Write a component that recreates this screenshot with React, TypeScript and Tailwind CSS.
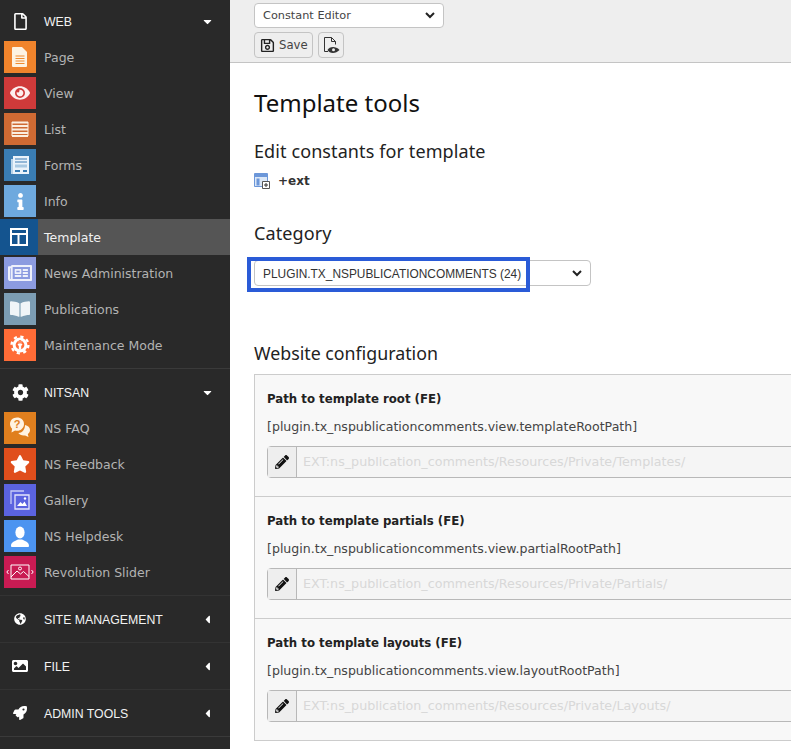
import React from "react";
import {
  FaBookOpen,
  FaCaretDown,
  FaCaretLeft,
  FaCog,
  FaEye,
  FaGlobeAmericas,
  FaImage,
  FaInfo,
  FaPencilAlt,
  FaRegFile,
  FaRegNewspaper,
  FaRegSave,
  FaRocket,
  FaStar,
} from "react-icons/fa";

const PageIcon = () => (
  <svg width="16" height="20" viewBox="0 0 16 20">
    <path d="M1 0h9l5 5v14a1 1 0 0 1-1 1H1a1 1 0 0 1-1-1V1a1 1 0 0 1 1-1z" fill="#fdf3e3" />
    <path d="M3.500 9h9M3.500 11.500h9M3.500 14h9M3.500 16.500h9" stroke="#f08c30" strokeWidth="1.2" />
  </svg>
);

const ListIcon = () => (
  <svg width="18" height="16" viewBox="0 0 18 16">
    <path d="M1 1.500h16M1 5h16M1 8.500h16M1 12h16M1 15h16" stroke="#fbeee0" strokeWidth="1.8" />
    <path d="M1 1v14M17 1v14" stroke="#fbeee0" strokeWidth="1" />
  </svg>
);

const FormsIcon = () => (
  <svg width="18" height="18" viewBox="0 0 18 18">
    <path d="M2 0h16v18H2z" fill="#eaf3fa" />
    <path d="M0 3h2v15H0z" fill="#b9d4e9" />
    <path d="M4 3h12M4 6h12" stroke="#3a7db3" strokeWidth="1.2" />
    <path d="M4 8.500h12v3H4z" fill="#a8c9e2" />
    <path d="M4 14h5v2H4zM12 14h4v2h-4z" fill="#3a7db3" />
  </svg>
);

const TemplateIcon = () => (
  <svg width="18" height="18" viewBox="0 0 18 18" fill="none">
    <path d="M1 1h16v16H1z" stroke="#fff" strokeWidth="2" />
    <path d="M1 6h16M8.500 6v11" stroke="#fff" strokeWidth="2" />
  </svg>
);

const MaintenanceIcon = () => (
  <svg width="20" height="20" viewBox="0 0 20 20">
    <circle cx="10" cy="10" r="8.400" fill="none" stroke="#fff" strokeWidth="2.400" strokeDasharray="3.200 3.400" />
    <circle cx="10" cy="10" r="7.400" fill="#fff" />
    <circle cx="10" cy="10" r="4.400" fill="#ff6c37" />
    <path d="M8.800 5h2.400v3.500l1.300 1-1.300 1.500v3.800H8.800V11L7.500 9.500l1.300-1z" fill="#fff" />
    <path d="M9.200 5h1.600v3.500H9.200z" fill="#ff6c37" />
  </svg>
);

const FaqIcon = () => (
  <svg width="22" height="22" viewBox="0 0 22 22">
    <path d="M16 8c3 .6 5 2.600 5 5 0 1.600-.8 3-2.200 4L19.500 20l-3.400-1.600c-.5.100-1 .1-1.500.1-2.300 0-4.300-1-5.300-2.500 3.800 0 6.700-3.300 6.700-8z" fill="#fff3e2" />
    <path d="M8 .5C4 .5 1 3.300 1 7c0 1.900.8 3.500 2.100 4.700L2.500 15.500l3.600-2c.6.200 1.200.3 1.900.3 4 0 7-2.900 7-6.800S12 .5 8 .5z" fill="#fff3e2" />
    <text x="8" y="11" textAnchor="middle" fontSize="11" fontWeight="700" fontFamily="'Liberation Sans', sans-serif" fill="#e07f1e">?</text>
  </svg>
);

const GalleryIcon = () => (
  <svg width="20" height="20" viewBox="0 0 20 20" fill="none">
    <path d="M14 1H1v13" stroke="#c8cbf6" strokeWidth="1.300" />
    <path d="M5 5h14v14H5z" stroke="#e4e5fb" strokeWidth="1.300" />
    <path d="M7 16l3.500-4 2 2 2-2.500 2.500 4.500z" fill="#fff" />
    <circle cx="15" cy="8.500" r="1.200" fill="#fff" />
  </svg>
);

const HelpdeskIcon = () => (
  <svg width="20" height="21" viewBox="0 0 20 21">
    <ellipse cx="10" cy="6.500" rx="4.600" ry="6" fill="#fff" />
    <path d="M1 20c0-3.500 2.500-4.300 7-6.500h4c4.500 2.200 7 3 7 6.500 0 .5-.5 1-1 1H2c-.5 0-1-.5-1-1z" fill="#fff" />
  </svg>
);

const SliderIcon = () => (
  <svg width="28" height="18" viewBox="0 0 28 18" fill="none">
    <path d="M5 2h18v14H5z" stroke="#fff" strokeWidth="1" />
    <path d="M5 14l6-6 3.500 3 3-2.500 5.500 5" stroke="#fff" strokeWidth="1" />
    <circle cx="14" cy="5.500" r="1.500" stroke="#fff" strokeWidth="1" />
    <path d="M2.500 7L.8 9l1.700 2M25.500 7l1.700 2-1.700 2" stroke="#fff" strokeWidth="1" />
  </svg>
);

const SavePreviewIcon = () => (
  <svg width="17" height="19" viewBox="0 0 17 19" fill="none">
    <path d="M5 15.500H1.500v-14h7l4 4v3M8.500 1.500v4h4" stroke="#333" strokeWidth="1" />
    <path d="M4.500 14c2-3.500 8-4.200 12 0-4 4.300-10 3.800-12 0z" fill="#333" />
    <circle cx="10.500" cy="13.800" r="1.500" fill="#eee" />
  </svg>
);

const ExtIcon = () => (
  <svg width="16" height="16" viewBox="0 0 16 16">
    <path d="M.5.500h13v13H.5z" fill="#dce8f7" stroke="#6c97d9" />
    <path d="M1 1h12v3H1z" fill="#6c97d9" />
    <path d="M2.500 5.500h3v7h-3z" fill="#6c97d9" />
    <path d="M8.500 8.500h7v7h-7z" fill="#fff" stroke="#555" />
    <path d="M12 10v4M10 12h4" stroke="#333" />
  </svg>
);

const modules1 = [
  { name: "Page", bg: "bg-[#f0842c]", icon: <PageIcon /> },
  { name: "View", bg: "bg-[#cf3a3a]", icon: <FaEye size={20} color="#fdeeee" /> },
  { name: "List", bg: "bg-[#cf6a33]", icon: <ListIcon /> },
  { name: "Forms", bg: "bg-[#3a7db3]", icon: <FormsIcon /> },
  { name: "Info", bg: "bg-[#6ea9de]", icon: <FaInfo size={17} color="#fff" /> },
];

const modules2 = [
  { name: "News Administration", bg: "bg-[#8c9be0]", icon: <FaRegNewspaper size={24} color="#eef0fb" /> },
  { name: "Publications", bg: "bg-[#7c9db3]", icon: <FaBookOpen size={20} color="#f0f5f8" /> },
  { name: "Maintenance Mode", bg: "bg-[#ff6c37]", icon: <MaintenanceIcon /> },
];

const modules3 = [
  { name: "NS FAQ", bg: "bg-[#e07f1e]", icon: <FaqIcon /> },
  { name: "NS Feedback", bg: "bg-[#e04e1c]", icon: <FaStar size={20} color="#fff" /> },
  { name: "Gallery", bg: "bg-[#5b63e0]", icon: <GalleryIcon /> },
  { name: "NS Helpdesk", bg: "bg-[#4c94f0]", icon: <HelpdeskIcon /> },
  { name: "Revolution Slider", bg: "bg-[#c91b53]", icon: <SliderIcon /> },
];

const constants = [
  {
    title: "Path to template root (FE)",
    key: "[plugin.tx_nspublicationcomments.view.templateRootPath]",
    value: "EXT:ns_publication_comments/Resources/Private/Templates/",
  },
  {
    title: "Path to template partials (FE)",
    key: "[plugin.tx_nspublicationcomments.view.partialRootPath]",
    value: "EXT:ns_publication_comments/Resources/Private/Partials/",
  },
  {
    title: "Path to template layouts (FE)",
    key: "[plugin.tx_nspublicationcomments.view.layoutRootPath]",
    value: "EXT:ns_publication_comments/Resources/Private/Layouts/",
  },
];

const Module = ({ name, bg, icon }: { name: string; bg: string; icon: React.ReactNode }) => (
  <div className="flex h-9 items-center pl-1">
    <div className={`flex h-8 w-8 items-center justify-center ${bg}`}>{icon}</div>
    <span className="ml-2 mt-[2px] text-[12.5px] text-[#b3b3b3]">{name}</span>
  </div>
);

const Group = ({ name, icon, open }: { name: string; icon: React.ReactNode; open?: boolean }) => (
  <div className="flex h-9 items-center pl-1 pr-4 text-white">
    <div className="flex w-8 items-center justify-center">{icon}</div>
    <span className="ml-2 mt-[2px] flex-1 font-['Liberation_Sans',sans-serif] text-[12.3px] text-[#f2f2f2]">{name}</span>
    {open ? <FaCaretDown size={13} /> : <FaCaretLeft size={13} />}
  </div>
);

const Chevron = () => (
  <svg width="10" height="7" viewBox="0 0 10 7" fill="none">
    <path d="M1 1l4 4 4-4" stroke="#222" strokeWidth="2" />
  </svg>
);

export default function App() {
  return (
    <div className="flex h-[749px] overflow-hidden bg-white font-['DejaVu_Sans',sans-serif]">
      <aside className="h-full w-[230px] shrink-0 bg-[#292929]">
        <div className="pt-[3px]">
          <Group name="WEB" open icon={<FaRegFile size={17} />} />
          {modules1.map((m) => (
            <Module key={m.name} {...m} />
          ))}
          <div className="flex h-9 items-center bg-[#555555]">
            <div className="flex h-9 w-[38px] items-center justify-center bg-[#14548f]">
              <TemplateIcon />
            </div>
            <span className="ml-1.5 mt-[2px] text-[12.5px] text-[#f0f0f0]">Template</span>
          </div>
          {modules2.map((m) => (
            <Module key={m.name} {...m} />
          ))}
        </div>
        <div className="mt-[5px] border-b border-[#3a3a3a]" />
        <div className="pt-[5px]">
          <Group name="NITSAN" open icon={<FaCog size={17} />} />
          {modules3.map((m) => (
            <Module key={m.name} {...m} />
          ))}
        </div>
        <div className="mt-[5px] border-b border-[#333333]" />
        <div className="py-[5px]">
          <Group name="SITE MANAGEMENT" icon={<FaGlobeAmericas size={12} />} />
        </div>
        <div className="border-b border-[#333333]" />
        <div className="py-[5px]">
          <Group name="FILE" icon={<FaImage size={16} />} />
        </div>
        <div className="border-b border-[#333333]" />
        <div className="py-[5px]">
          <Group name="ADMIN TOOLS" icon={<FaRocket size={14} />} />
        </div>
        <div className="border-b border-[#3a3a3a]" />
      </aside>

      <main className="min-w-0 flex-1 overflow-hidden text-[#333]">
        <div className="h-[63px] border-b border-[#c4c4c4] bg-[#eeeeee] pl-6 pt-[3px]">
          <div className="flex h-[25px] w-[190px] items-center justify-between rounded-sm border border-[#c4c4c4] bg-white pl-2 pr-2 text-[11.3px] text-[#444]">
            <span className="mt-[2px]">Constant Editor</span>
            <Chevron />
          </div>
          <div className="mt-1 flex gap-[5px]">
            <div className="flex h-[26px] w-[59px] items-center gap-1 rounded-sm border border-[#c4c4c4] bg-[#eeeeee] pl-[5px] text-[11.7px] text-[#444]">
              <FaRegSave size={15} color="#222" />
              <span className="mt-[2px]">Save</span>
            </div>
            <div className="flex h-[26px] w-[26px] items-center justify-center rounded-sm border border-[#c4c4c4] bg-[#eeeeee]">
              <SavePreviewIcon />
            </div>
          </div>
        </div>

        <div className="pl-6">
          <h1 className="mt-[22px] font-['Noto_Sans',sans-serif] text-[24px] leading-9 text-[#111]">Template tools</h1>
          <h2 className="mt-[18px] font-['Noto_Sans',sans-serif] text-[18px] leading-6 tracking-[0.1px] text-[#222]">
            Edit constants for template
          </h2>
          <div className="mt-[9px] flex h-[18px] items-center gap-2">
            <ExtIcon />
            <span className="text-[12px] font-bold text-[#333]">+ext</span>
          </div>
          <h2 className="mt-[31px] font-['Noto_Sans',sans-serif] text-[18px] leading-6 tracking-[0.1px] text-[#222]">
            Category
          </h2>
          <div className="relative mt-[15px] flex h-[26px] w-[337px] items-center justify-between rounded-sm border border-[#c4c4c4] bg-white pl-2 pr-2 font-['Liberation_Sans',sans-serif] text-[11.9px] text-[#333]">
            <span className="mt-1">PLUGIN.TX_NSPUBLICATIONCOMMENTS (24)</span>
            <Chevron />
            <div className="absolute left-[-8px] top-[-4px] h-[35px] w-[283px] border-4 border-[#2a5bd7]" />
          </div>
          <h2 className="mt-[55px] font-['Noto_Sans',sans-serif] text-[17.8px] leading-6 text-[#222]">
            Website configuration
          </h2>
          <div className="mt-[9px] w-[700px] border border-[#cccccc] bg-[#f8f8f8]">
            {constants.map((c, i) => (
              <div key={c.title} className={`px-3 pt-4 ${i > 0 ? "h-[122px] border-t border-[#cccccc]" : "h-[121px]"}`}>
                <div className="text-[11.75px] font-bold leading-4 text-[#222]">{c.title}</div>
                <div className="mt-3 text-[12.57px] leading-4 text-[#444]">{c.key}</div>
                <div className="mt-[11px] flex h-8 items-center rounded-sm border border-[#b8b8b8] bg-[#f5f5f5]">
                  <div className="flex h-full w-[29px] items-center justify-center border-r border-[#b8b8b8] bg-[#eeeeee]">
                    <FaPencilAlt size={14} color="#111" />
                  </div>
                  <span className="pl-[6px] text-[12.7px] text-[#d8d8d8]">{c.value}</span>
                </div>
              </div>
            ))}
          </div>
        </div>
      </main>
    </div>
  );
}
